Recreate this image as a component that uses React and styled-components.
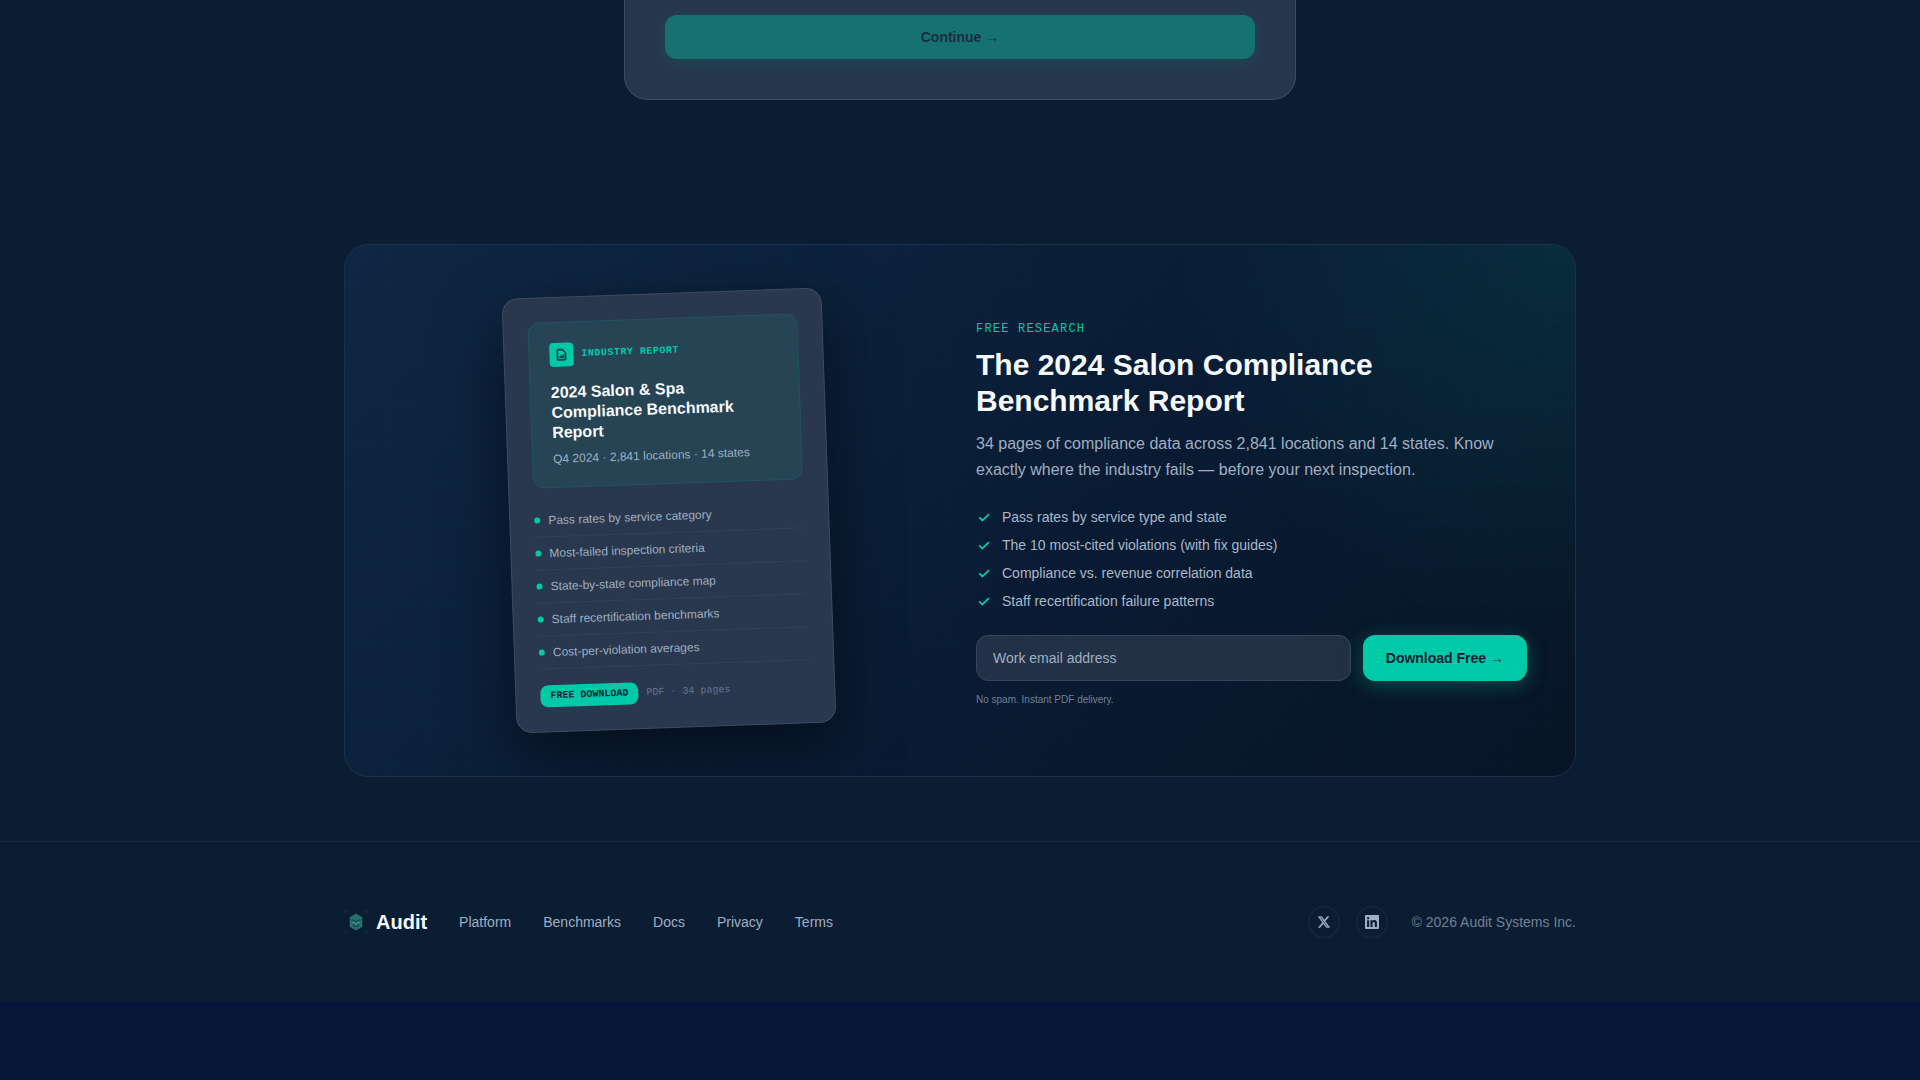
import React, { useState } from 'react';
import styled, { createGlobalStyle } from 'styled-components';

const GlobalStyle = createGlobalStyle`
  * {
    box-sizing: border-box;
  }

  body {
    margin: 0;
    background-color: #061739;
    color: #f7fafc;
    font-family: 'Liberation Sans', Arial, sans-serif;
    font-size: 16px;
    line-height: 24px;
  }

  h2, h3, p, ul {
    margin: 0;
    padding: 0;
  }

  ul {
    list-style: none;
  }

  button, input {
    font-family: inherit;
  }
`;

const Page = styled.div`
  background-color: #0b1d33;
`;

const FormSection = styled.section`
  padding: 0 24px 144px;
`;

const FormCard = styled.form`
  max-width: 672px;
  margin: 0 auto;
  padding: 15px 40px 40px;
  background-color: #26364d;
  border: 1px solid #3d4c62;
  border-top: none;
  border-radius: 0 0 24px 24px;
`;

const Button = styled.button`
  padding: 0 23px;
  height: ${props => props.$full ? '44px' : '46px'};
  width: ${props => props.$full ? '100%' : 'auto'};
  flex-shrink: 0;
  font-size: 14px;
  font-weight: 700;
  line-height: 20px;
  color: #0b1d33;
  background-color: #00c9a7;
  border: none;
  border-radius: 12px;
  box-shadow: 0 4px 20px rgba(0, 201, 167, 0.3);
  opacity: ${props => props.disabled ? 0.4 : 1};
  cursor: ${props => props.disabled ? 'not-allowed' : 'pointer'};
`;

const Container = styled.div`
  max-width: 1280px;
  margin: 0 auto;
  padding: 0 24px;
`;

const ResearchCard = styled.section`
  display: grid;
  grid-template-columns: 1fr 1fr;
  align-items: center;
  gap: 32px;
  padding: 48px;
  overflow: hidden;
  border: 1px solid #1e3045;
  border-radius: 24px;
  background:
    radial-gradient(circle 400px at 100% 0, rgba(0, 201, 167, 0.11), transparent),
    linear-gradient(rgba(0, 201, 167, 0.02) 1px, transparent 1px) 0 35px / 40px 40px,
    linear-gradient(90deg, rgba(0, 201, 167, 0.02) 1px, transparent 1px) 5px 0 / 40px 40px,
    linear-gradient(135deg, #0f2744 0%, #091b33 60%, #071526 100%);
`;

const ReportCard = styled.article`
  width: 320px;
  justify-self: center;
  padding: 24px;
  background-color: #29384e;
  border: 1px solid #3e4c60;
  border-radius: 16px;
  box-shadow: 0 24px 64px rgba(0, 0, 0, 0.5);
  transform: rotate(-2deg);
`;

const ReportCover = styled.div`
  padding: 20px;
  margin-bottom: 16px;
  background-color: #264454;
  border: 1px solid #1f555e;
  border-radius: 12px;
`;

const CoverHead = styled.div`
  display: flex;
  align-items: center;
  gap: 8px;
  margin-bottom: 16px;
`;

const CoverIcon = styled.span`
  display: flex;
  align-items: center;
  justify-content: center;
  width: 24px;
  height: 24px;
  color: #0b3441;
  background-color: #00c9a7;
  border-radius: 4px;
`;

const CoverLabel = styled.span`
  font-family: 'Liberation Mono', monospace;
  font-size: 10px;
  font-weight: 700;
  line-height: 14px;
  letter-spacing: 0.05em;
  color: #00c9a7;
`;

const CoverTitle = styled.h3`
  font-size: 16px;
  font-weight: 700;
  line-height: 20px;
  margin-bottom: 8px;
`;

const CoverMeta = styled.p`
  font-size: 12px;
  line-height: 16px;
  color: #a0aec0;
`;

const ReportRow = styled.li`
  display: flex;
  align-items: center;
  gap: 8px;
  padding: 8px 0;
  font-size: 12px;
  line-height: 16px;
  color: #a0aec0;
  border-bottom: 1px solid #324157;

  &::before {
    content: '';
    width: 6px;
    height: 6px;
    border-radius: 50%;
    background-color: #00c9a7;
  }
`;

const ReportFoot = styled.div`
  display: flex;
  align-items: center;
  gap: 8px;
  margin-top: 16px;
  font-family: 'Liberation Mono', monospace;
  font-size: 10px;
  line-height: 14px;
  color: #68778d;
`;

const Badge = styled.span`
  padding: 4px 10px;
  font-weight: 700;
  color: #0b1d33;
  background-color: #00c9a7;
  border-radius: 8px;
`;

const EyebrowRow = styled.div`
  margin-bottom: 6px;
`;

const Eyebrow = styled.span`
  font-family: 'Liberation Mono', monospace;
  font-size: 12px;
  letter-spacing: 0.1em;
  color: #00c9a7;
`;

const Title = styled.h2`
  margin-bottom: 12px;
  font-size: 30px;
  font-weight: 700;
  line-height: 36px;
`;

const Lead = styled.p`
  margin-bottom: 24px;
  font-size: 16px;
  line-height: 26px;
  color: #a0aec0;
`;

const CheckList = styled.ul`
  display: grid;
  gap: 8px;
  margin-bottom: 24px;
`;

const CheckItem = styled.li`
  display: flex;
  align-items: center;
  gap: 10px;
  font-size: 14px;
  line-height: 20px;
  color: #a9b7c8;

  svg {
    color: #00c9a7;
  }
`;

const DownloadForm = styled.form`
  display: flex;
  gap: 12px;
`;

const EmailInput = styled.input`
  flex: 1;
  min-width: 0;
  height: 46px;
  padding: 0 16px;
  font-size: 14px;
  color: #f7fafc;
  background-color: rgba(51, 65, 85, 0.6);
  border: 1px solid #37465b;
  border-radius: 12px;

  &::placeholder {
    color: #a0aec0;
    opacity: 1;
  }
`;

const Note = styled.p`
  margin-top: 12px;
  font-size: 10px;
  line-height: 13px;
  color: #718096;
`;

const Footer = styled.footer`
  margin-top: 64px;
  padding: 64px 0;
  border-top: 1px solid #172b41;
`;

const FooterRow = styled.div`
  display: flex;
  align-items: center;
  justify-content: space-between;
`;

const FooterNav = styled.nav`
  display: flex;
  align-items: center;
  gap: 32px;
`;

const Brand = styled.a`
  display: flex;
  align-items: center;
  gap: 8px;
  font-size: 20px;
  font-weight: 700;
  line-height: 28px;
  color: #f7fafc;
  text-decoration: none;
`;

const FooterLink = styled.a`
  font-size: 14px;
  line-height: 20px;
  color: #a0aec0;
  text-decoration: none;
`;

const FooterSide = styled.div`
  display: flex;
  align-items: center;
  gap: 16px;
`;

const SocialLink = styled.a`
  display: flex;
  align-items: center;
  justify-content: center;
  width: 32px;
  height: 32px;
  color: #a0b0c3;
  border: 1px solid #1a2d44;
  border-radius: 50%;
`;

const Copyright = styled.p`
  margin-left: 8px;
  font-size: 14px;
  line-height: 20px;
  color: #718096;
`;

const REPORT_ROWS = [
  'Pass rates by service category',
  'Most-failed inspection criteria',
  'State-by-state compliance map',
  'Staff recertification benchmarks',
  'Cost-per-violation averages',
];

const CHECKS = [
  'Pass rates by service type and state',
  'The 10 most-cited violations (with fix guides)',
  'Compliance vs. revenue correlation data',
  'Staff recertification failure patterns',
];

const LINKS = ['Platform', 'Benchmarks', 'Docs', 'Privacy', 'Terms'];

const FileIcon = () => (
  <svg width="14" height="14" viewBox="0 0 24 24" fill="none" stroke="currentColor" strokeWidth="2.8" aria-hidden="true">
    <path d="M7 3.200h6.500l5.300 5.300V19a2 2 0 0 1-2 2H7a2 2 0 0 1-2-2V5.200a2 2 0 0 1 2-2z" strokeLinejoin="round" />
    <path d="M8.500 17.500v-2l3-2 1.500 1 3-3v6z" fill="currentColor" strokeWidth="0.600" />
  </svg>
);

const CheckIcon = () => (
  <svg width="16" height="16" viewBox="0 0 24 24" fill="none" stroke="currentColor" strokeWidth="2.800" aria-hidden="true">
    <path d="M4.800 12.600l4.800 4.700L19.500 7.800" />
  </svg>
);

const LogoIcon = () => (
  <svg width="24" height="24" viewBox="0 0 24 24" fill="none" aria-hidden="true">
    <path d="M1 4V1h3M20 1h3v3M23 20v3h-3M4 23H1v-3" stroke="#153142" strokeWidth="1" />
    <path d="M12 3.500l6.300 3.800v9.400L12 20.500l-6.300-3.800V7.300z" fill="#23706c" />
    <path d="M7.500 9.500l4.500 2.500 4.500-2.500" stroke="#173f50" strokeWidth="1.300" />
    <path d="M9 14.500c1 2.500 5 2.500 6 0" stroke="#173f50" strokeWidth="1.200" />
    <path d="M8.500 12.300h2.500M13 12.300h2.500M12 13v2" stroke="#5e9c9b" strokeWidth="1" />
  </svg>
);

const XIcon = () => (
  <svg width="14" height="14" viewBox="0 0 24 24" fill="currentColor" stroke="currentColor" strokeWidth="0.600" aria-hidden="true">
    <path d="M17.500 2.500h3.200l-6.700 8L22 21.500h-6.200l-4.900-6.600-5.600 6.600H2.200l7.200-8.500L1.800 2.500h6.400l4.400 6zm-1.100 17h1.700L7.200 4.400H5.400z" />
  </svg>
);

const LinkedInIcon = () => (
  <svg width="14" height="14" viewBox="0 0 24 24" fill="currentColor" aria-hidden="true">
    <path d="M20.447 20.452h-3.554v-5.569c0-1.328-.027-3.037-1.852-3.037-1.853 0-2.136 1.445-2.136 2.939v5.667H9.351V9h3.414v1.561h.046c.477-.9 1.637-1.850 3.370-1.850 3.601 0 4.267 2.370 4.267 5.455v6.286zM5.337 7.433a2.062 2.062 0 1 1 0-4.125 2.062 2.062 0 0 1 0 4.125zm1.782 13.019H3.555V9h3.564v11.452zM22.225 0H1.771C.792 0 0 .774 0 1.729v20.542C0 23.227.792 24 1.771 24h20.451C23.200 24 24 23.227 24 22.271V1.729C24 .774 23.200 0 22.222 0h.003z" />
  </svg>
);

export default function App() {
  const [email, setEmail] = useState('');

  const handleSubmit = (e) => {
    e.preventDefault();
  };

  return (
    <>
      <GlobalStyle />
      <Page>
        <FormSection>
          <FormCard onSubmit={handleSubmit}>
            <Button type="submit" disabled $full>Continue →</Button>
          </FormCard>
        </FormSection>

        <Container>
          <ResearchCard>
            <ReportCard>
              <ReportCover>
                <CoverHead>
                  <CoverIcon><FileIcon /></CoverIcon>
                  <CoverLabel>INDUSTRY REPORT</CoverLabel>
                </CoverHead>
                <CoverTitle>2024 Salon &amp; Spa Compliance Benchmark Report</CoverTitle>
                <CoverMeta>Q4 2024 · 2,841 locations · 14 states</CoverMeta>
              </ReportCover>
              <ul>
                {REPORT_ROWS.map(row => <ReportRow key={row}>{row}</ReportRow>)}
              </ul>
              <ReportFoot>
                <Badge>FREE DOWNLOAD</Badge>
                <span>PDF · 34 pages</span>
              </ReportFoot>
            </ReportCard>

            <div>
              <EyebrowRow>
                <Eyebrow>FREE RESEARCH</Eyebrow>
              </EyebrowRow>
              <Title>The 2024 Salon Compliance Benchmark Report</Title>
              <Lead>
                34 pages of compliance data across 2,841 locations and 14 states. Know
                exactly where the industry fails — before your next inspection.
              </Lead>
              <CheckList>
                {CHECKS.map(item => (
                  <CheckItem key={item}><CheckIcon />{item}</CheckItem>
                ))}
              </CheckList>
              <DownloadForm onSubmit={handleSubmit}>
                <EmailInput
                  type="email"
                  aria-label="Work email address"
                  placeholder="Work email address"
                  value={email}
                  onChange={(e) => setEmail(e.target.value)}
                />
                <Button type="submit">Download Free →</Button>
              </DownloadForm>
              <Note>No spam. Instant PDF delivery.</Note>
            </div>
          </ResearchCard>
        </Container>

        <Footer>
          <Container>
            <FooterRow>
              <FooterNav>
                <Brand href="#"><LogoIcon />Audit</Brand>
                {LINKS.map(link => <FooterLink key={link} href="#">{link}</FooterLink>)}
              </FooterNav>
              <FooterSide>
                <SocialLink href="#" aria-label="X"><XIcon /></SocialLink>
                <SocialLink href="#" aria-label="LinkedIn"><LinkedInIcon /></SocialLink>
                <Copyright>© 2026 Audit Systems Inc.</Copyright>
              </FooterSide>
            </FooterRow>
          </Container>
        </Footer>
      </Page>
    </>
  );
}
